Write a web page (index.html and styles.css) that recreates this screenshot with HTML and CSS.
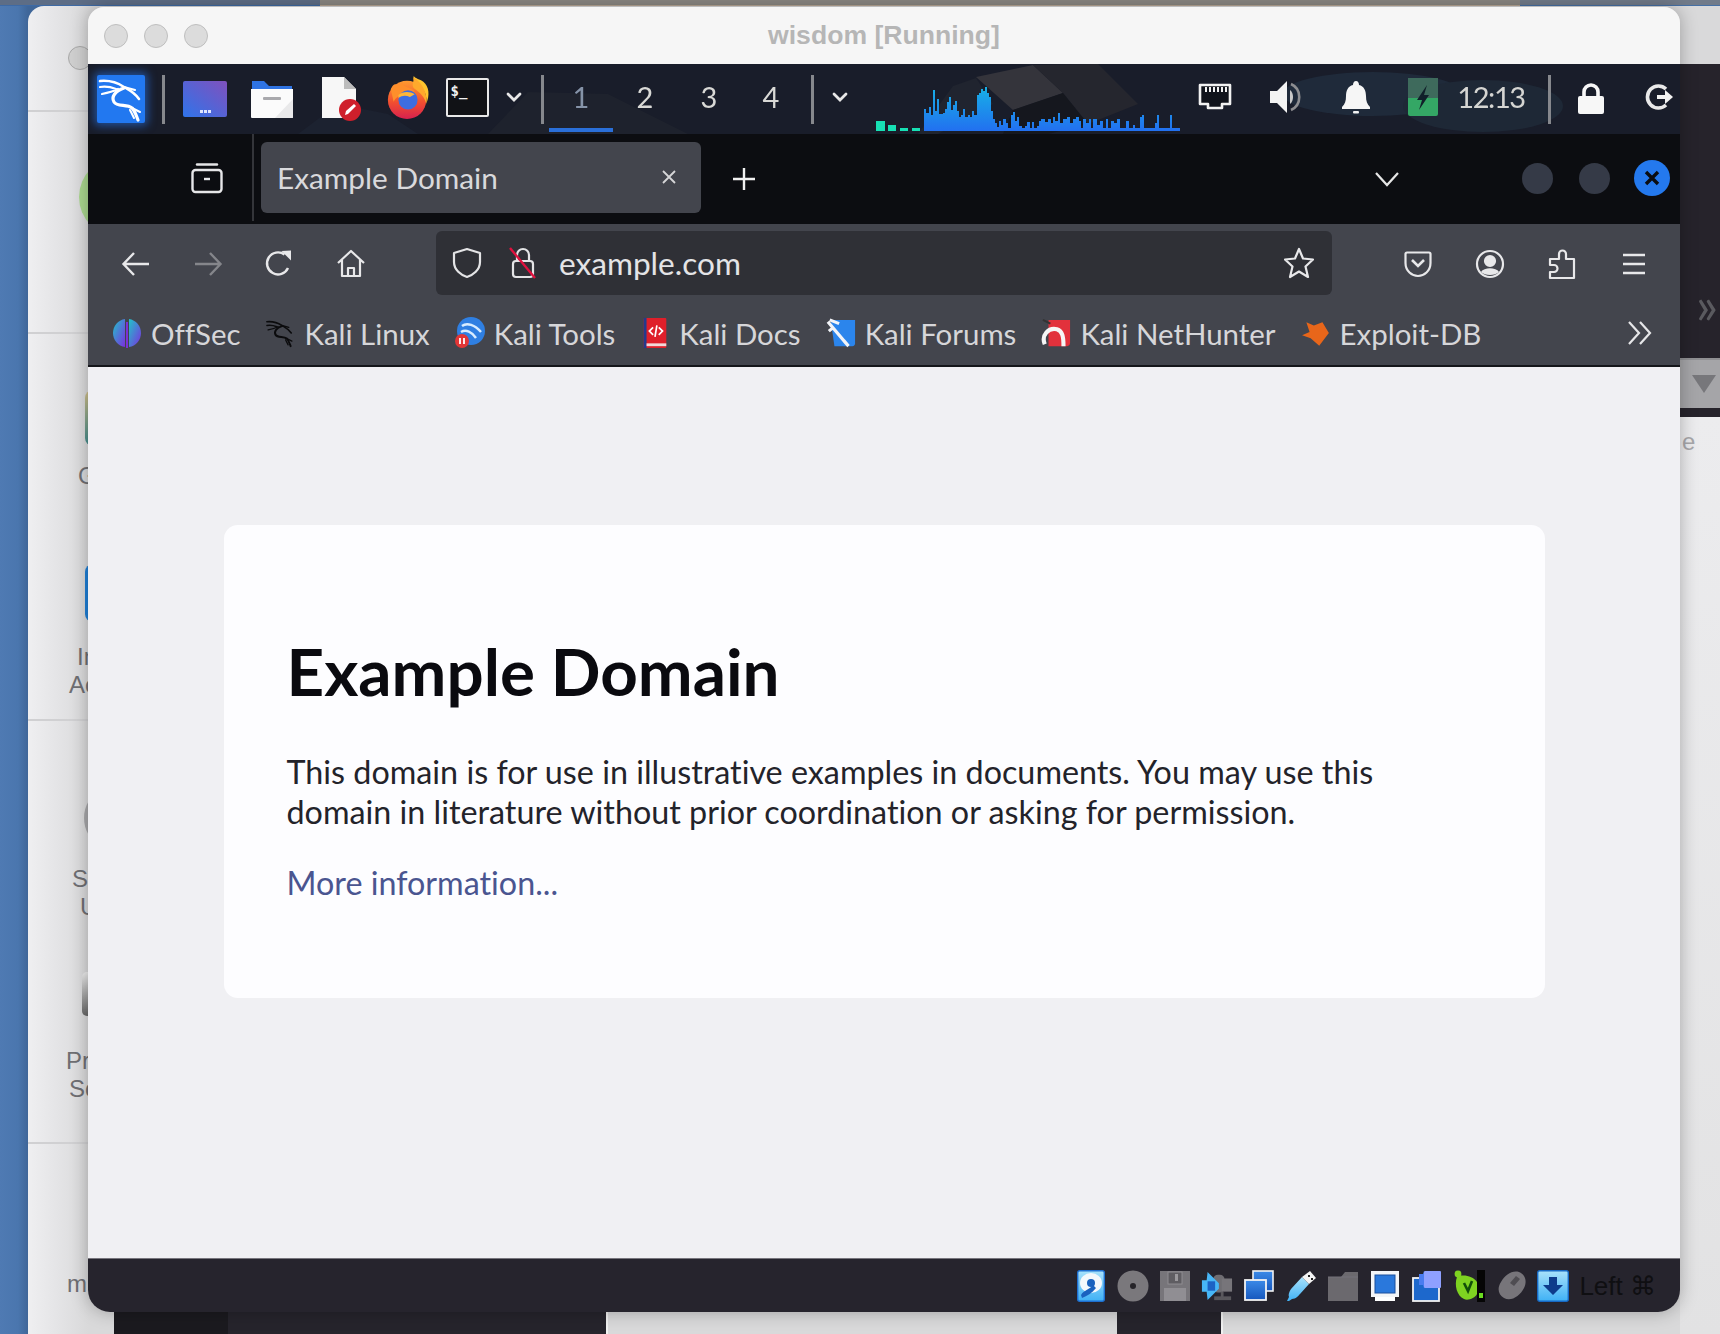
FILE: index.html
```html
<!DOCTYPE html>
<html lang="en">
<head>
<meta charset="utf-8">
<title>wisdom [Running]</title>
<link rel="stylesheet" href="styles.css">
</head>
<body>
<svg class="defs" width="0" height="0" aria-hidden="true">
  <defs>
    <symbol id="dragon" viewBox="0 0 48 48">
      <g fill="none" stroke="currentColor" stroke-linecap="round" stroke-linejoin="round">
        <path stroke-width="2.6" d="M3 6C13 5 21 8 27 12C32 15 37 17 42 24"/>
        <path stroke-width="2.2" d="M3 12C9 11 14 12 19 14M5 19C10 18 15 17 21 14M27 12L38 15"/>
        <path stroke-width="3.2" d="M27 13C18 16 14 22 17 27C20 32 30 29 35 33C38 36 39 40 41 45"/>
        <path stroke-width="2" d="M35 33L43 37M33 35L37 43"/>
      </g>
    </symbol>
    <linearGradient id="gMenu" x1="0" y1="1" x2="1" y2="0"><stop offset="0" stop-color="#2f74ea"/><stop offset="1" stop-color="#8051bd"/></linearGradient>
    <linearGradient id="gGraph" x1="0" y1="0" x2="0" y2="1"><stop offset="0" stop-color="#17b0e6"/><stop offset="1" stop-color="#2270f0"/></linearGradient>
    <linearGradient id="gFox" x1="0" y1="0" x2="0" y2="1"><stop offset="0" stop-color="#ff9b30"/><stop offset=".55" stop-color="#f2502f"/><stop offset="1" stop-color="#d8204f"/></linearGradient>
    <linearGradient id="gOff" x1="0" y1="0" x2="1" y2="1"><stop offset="0" stop-color="#21c3c9"/><stop offset="1" stop-color="#7a2fe0"/></linearGradient>
    <linearGradient id="gSky" x1="0" y1="0" x2="0" y2="1"><stop offset="0" stop-color="#a9e2fb"/><stop offset="1" stop-color="#3fb1f5"/></linearGradient>
    <linearGradient id="gDeep" x1="0" y1="0" x2="0" y2="1"><stop offset="0" stop-color="#3b8ae8"/><stop offset="1" stop-color="#1657bd"/></linearGradient>
  </defs>
</svg>

<div class="topstrip"><span class="ts-a"></span><span class="ts-b"></span><span class="ts-c"></span></div>

<section class="backwin">
  <div class="back-head"><span class="back-light"></span></div>
  <div class="back-sec sec-a"><span class="back-disc"></span></div>
  <div class="back-sec sec-b">
    <span class="frag frag-icon fi-a"></span>
    <p class="lbl l-g">G</p>
    <span class="frag frag-icon fi-b"></span>
    <p class="lbl l-in">In</p>
    <p class="lbl l-ac">Ac</p>
  </div>
  <div class="back-sec sec-c">
    <span class="frag frag-icon fi-c"></span>
    <p class="lbl l-s">S</p>
    <p class="lbl l-u">U</p>
    <span class="frag frag-icon fi-d"></span>
    <p class="lbl l-pr">Pr</p>
    <p class="lbl l-so">So</p>
  </div>
  <div class="back-sec sec-d"><p class="lbl l-m">m</p></div>
</section>

<aside class="sideapp">
  <div class="side-dark"><span class="side-chev">»</span></div>
  <div class="side-grey"><svg width="26" height="18" viewBox="0 0 26 18"><path d="M1 0H25L13 18Z" fill="#77777b"/></svg></div>
  <div class="side-bar"></div>
  <div class="side-light"><span class="side-e">e</span></div>
</aside>

<div class="under under-a"><span class="under-dark"></span></div>
<div class="under under-b"></div>

<main class="vmwin">
  <header class="titlebar">
    <span class="lights"><i></i><i></i><i></i></span>
    <span class="wintitle">wisdom [Running]</span>
  </header>

  <div class="vm">
    <nav class="panel">
      <svg class="wall" viewBox="0 0 1592 70" preserveAspectRatio="none" aria-hidden="true">
        <polygon points="400,70 440,28 520,30 600,70" fill="#1e222d"/>
        <polygon points="830,70 865,22 888,14 905,40 850,70" fill="#20242f"/>
        <polygon points="888,13 945,1 975,29 925,46" fill="#34343b"/>
        <polygon points="945,1 1010,0 1050,40 1000,60 975,29" fill="#25262e"/>
        <polygon points="925,46 975,29 1000,60 960,70 915,70" fill="#15171e"/>
        <ellipse cx="1285" cy="30" rx="90" ry="22" fill="#1f2a3a"/>
        <ellipse cx="1395" cy="42" rx="80" ry="26" fill="#1e2836"/>
        <polygon points="210,70 250,40 300,50 330,70" fill="#1c2230"/>
      </svg>
      <span class="cell c-kali">
        <span class="kali-tile"><svg width="48" height="48"><use href="#dragon"/></svg></span>
      </span>
      <span class="cell c-sep"><i class="psep"></i></span>
      <span class="cell c-menu">
        <svg width="44" height="36" viewBox="0 0 44 36"><rect width="44" height="36" rx="2" fill="url(#gMenu)"/><g fill="#dfe6ff"><rect x="17" y="29" width="3" height="3"/><rect x="21" y="29" width="3" height="3"/><rect x="25" y="29" width="3" height="3"/></g></svg>
      </span>
      <span class="cell c-folder">
        <svg width="44" height="40" viewBox="0 0 44 40"><path d="M2 2H14L19 7H42V14H2Z" fill="#2f73e2"/><path d="M1 10H43V38Q43 39 42 39H2Q1 39 1 38Z" fill="#fbfbfb"/><path d="M25 39L43 20V38Q43 39 42 39Z" fill="#e9e9ea"/><rect x="13" y="18" width="18" height="3" rx="1" fill="#a9a9ad"/></svg>
      </span>
      <span class="cell c-doc">
        <svg width="42" height="44" viewBox="0 0 42 44"><path d="M1 0H23L35 12V41H1Z" fill="#f7f7f7"/><path d="M23 0L35 12H23Z" fill="#bcbcbc"/><circle cx="29" cy="33" r="11" fill="#cf1f2b"/><path d="M24 38L25 34L33 27L35 29L27 37Z" fill="#fff"/></svg>
      </span>
      <span class="cell c-ff up">
        <svg width="46" height="46" viewBox="0 0 48 48"><circle cx="23" cy="27" r="20" fill="url(#gFox)"/><path d="M30 2C28 8 34 10 38 14C42 18 44 24 43 31C47 22 46 13 40 8C36 5 32 5 30 2Z" fill="#ffc52e"/><path d="M30 4C30 10 26 13 33 17C38 21 41 24 43 31C44 20 40 10 30 4Z" fill="#ffa92c"/><path d="M6 16C8 11 11 9 13 12L18 10C20 14 26 14 31 18L23 21C16 21 11 24 9 29Z" fill="#ff8f2b"/><circle cx="24" cy="27" r="10" fill="#3e6de0"/><path d="M14 22C18 18 26 18 31 21L26 24C22 22 18 22 14 25Z" fill="#ffb637"/></svg>
      </span>
      <span class="cell c-term up"><span class="term">$_</span></span>
      <span class="cell c-chev up"><svg width="16" height="10" viewBox="0 0 16 10"><path d="M2 2L8 8L14 2" fill="none" stroke="#e8e8e8" stroke-width="2.8" stroke-linecap="round"/></svg></span>
      <span class="cell c-sep2"><i class="psep"></i></span>
      <span class="cell c-ws1 ws ws-on">1</span>
      <span class="cell c-ws2 ws">2</span>
      <span class="cell c-ws3 ws">3</span>
      <span class="cell c-ws4 ws">4</span>
      <span class="cell c-sep3"><i class="psep"></i></span>
      <span class="cell c-chev2 up"><svg width="16" height="10" viewBox="0 0 16 10"><path d="M2 2L8 8L14 2" fill="none" stroke="#e8e8e8" stroke-width="2.8" stroke-linecap="round"/></svg></span>
      <span class="cell c-graph">
        <svg width="305" height="47" viewBox="0 0 305 47">
          <g fill="#17e0b4"><rect x="1" y="36" width="9" height="10"/><rect x="13" y="40" width="8" height="6"/><rect x="25" y="43" width="8" height="3"/><rect x="37" y="43" width="8" height="3"/></g>
          <path fill="url(#gGraph)" d="M49 46V24H51V28H54V22H56V30H58V5H60V26H62V14H64V29H68V28H70V24H72V17H74V12H76V25H78V20H80V16H82V26H84V32H86V30H88V24H90V32H93V30H95V32H97V26H99V30H102V10H104V8H106V4H108V6H110V2H112V8H114V12H116V26H118V34H120V38H122V42H124V36H126V40H128V34H131V38H133V43H136V30H138V27H140V36H142V32H144V41H147V43H150V41H152V37H155V43H157V37H159V43H162V41H164V36H166V34H170V37H173V34H176V38H178V32H180V36H183V28H185V38H188V34H192V32H195V38H198V34H201V32H204V36H206V43H208V34H211V38H214V34H216V43H218V34H222V40H225V36H228V43H231V34H233V43H236V36H239V38H242V34H245V43H248V43H251V36H254V43H258V40H260V43H265V32H267V30H269V43H272V43H280V38H282V30H284V43H290V43H295V30H297V43H305V46Z"/>
        </svg>
      </span>
      <span class="cell c-net up">
        <svg width="34" height="28" viewBox="0 0 34 28"><path d="M2 2H32V21H24V25H10V21H2Z" fill="#10131b" stroke="#f1f1f1" stroke-width="2.6" stroke-linejoin="round"/><path d="M8 4V9M12 4V9M16 4V9M20 4V9M24 4V9M28 4V9" stroke="#f1f1f1" stroke-width="2"/></svg>
      </span>
      <span class="cell c-vol up">
        <svg width="34" height="34" viewBox="0 0 34 34"><path d="M1 11H8L18 1V33L8 23H1Z" fill="#f3f3f3"/><path d="M21 10C25 13 25 21 21 24Z" fill="#c9c9c9"/><path d="M22 4C33 9 33 25 22 30" fill="none" stroke="#8d8d90" stroke-width="2.6"/></svg>
      </span>
      <span class="cell c-bell up">
        <svg width="30" height="34" viewBox="0 0 30 34"><path d="M15 1C17 1 18 3 18 5C23 6 25 11 25 16C25 21 26 24 29 27V29H1V27C4 24 5 21 5 16C5 11 7 6 12 5C12 3 13 1 15 1Z" fill="#f6f6f6"/><rect x="12" y="31" width="6" height="2.4" rx="1" fill="#f1f1f1"/></svg>
      </span>
      <span class="cell c-batt up">
        <svg width="32" height="40" viewBox="0 0 32 40"><rect x="1" y="1" width="30" height="38" rx="2" fill="#34a765"/><rect x="1" y="1" width="30" height="20" fill="#3e6a5c"/><path d="M20 8L10 23H15L12 33L22 18H17Z" fill="#11202a"/></svg>
      </span>
      <span class="cell c-clock">12:13</span>
      <span class="cell c-sep4"><i class="psep"></i></span>
      <span class="cell c-lock">
        <svg width="28" height="32" viewBox="0 0 28 32"><path d="M7 14V9A7 7 0 0 1 21 9V14" fill="none" stroke="#f7f7f7" stroke-width="3.6"/><rect x="1" y="13" width="26" height="18" rx="2" fill="#f7f7f7"/></svg>
      </span>
      <span class="cell c-out up">
        <svg width="30" height="30" viewBox="0 0 30 30"><path d="M22 7A11 11 0 1 0 22 23" fill="none" stroke="#e9e9e9" stroke-width="3.6"/><path d="M13 15H23" stroke="#f3f3f3" stroke-width="4"/><path d="M21 8L29 15L21 22Z" fill="#f3f3f3"/></svg>
      </span>
    </nav>

    <div class="ff">
      <div class="tabbar">
        <span class="tb-view">
          <svg width="32" height="32" viewBox="0 0 32 32" fill="none" stroke="#e6e6e8" stroke-width="2.4"><path d="M6 2.5H26" stroke-linecap="round"/><rect x="1.5" y="8" width="29" height="22" rx="3"/><path d="M13 17H19"/></svg>
        </span>
        <span class="tb-sep"></span>
        <div class="tab">
          <span class="tab-title">Example Domain</span>
          <svg class="tab-x" width="16" height="16" viewBox="0 0 16 16"><path d="M2 2L14 14M14 2L2 14" stroke="#d6d6d8" stroke-width="1.8"/></svg>
        </div>
        <svg class="tb-plus" width="26" height="26" viewBox="0 0 26 26"><path d="M13 2V24M2 13H24" stroke="#f0f0f0" stroke-width="2.4"/></svg>
        <svg class="tb-list" width="26" height="16" viewBox="0 0 26 16"><path d="M2 2L13 14L24 2" fill="none" stroke="#e6e6e6" stroke-width="2.2"/></svg>
        <span class="wbtn"></span>
        <span class="wbtn wbtn-2"></span>
        <span class="wbtn-close"><svg width="16" height="16" viewBox="0 0 16 16"><path d="M2 2L14 14M14 2L2 14" stroke="#0b0d12" stroke-width="3.4"/></svg></span>
      </div>

      <div class="toolbar">
        <span class="tbtn"><svg width="30" height="26" viewBox="0 0 30 26" fill="none" stroke="#e8e8ea" stroke-width="2.4"><path d="M28 13H3M13 2L2.5 13L13 24"/></svg></span>
        <span class="tbtn"><svg width="30" height="26" viewBox="0 0 30 26" fill="none" stroke="#85868b" stroke-width="2.4"><path d="M2 13H27M17 2L27.5 13L17 24"/></svg></span>
        <span class="tbtn"><svg width="30" height="30" viewBox="0 0 30 30" fill="none" stroke="#e8e8ea" stroke-width="2.4"><path d="M24 19A11 11 0 1 1 20.5 5.5"/><path d="M17.5 2L27 1.5V11.5Z" fill="#e8e8ea" stroke="none"/></svg></span>
        <span class="tbtn"><svg width="30" height="30" viewBox="0 0 30 30" fill="none" stroke="#e8e8ea" stroke-width="2.2" stroke-linejoin="round"><path d="M2 14L15 2L28 14M6 11V27H24V11M12 27V19H18V27"/></svg></span>
        <div class="urlbar">
          <svg class="ub-shield" width="30" height="32" viewBox="0 0 30 32"><path d="M15 2L28 6V15C28 23 21 28 15 30C9 28 2 23 2 15V6Z" fill="none" stroke="#e4e4e6" stroke-width="2.2" stroke-linejoin="round"/></svg>
          <svg class="ub-lock" width="30" height="34" viewBox="0 0 30 34"><path d="M9 15V9A6 6 0 0 1 21 9V15" fill="none" stroke="#e4e4e6" stroke-width="2.2"/><rect x="5" y="15" width="20" height="16" rx="3" fill="none" stroke="#e4e4e6" stroke-width="2.2"/><path d="M2 2L27 32" stroke="#e0123f" stroke-width="2.4"/></svg>
          <span class="url">example.com</span>
          <svg class="ub-star" width="30" height="32" viewBox="0 0 30 32"><path d="M15 2L19 11.5L29 12.5L21.5 19.5L24 30L15 24.5L6 30L8.5 19.5L1 12.5L11 11.5Z" fill="none" stroke="#e8e8ea" stroke-width="2.2" stroke-linejoin="round"/></svg>
        </div>
        <span class="tbtn-r first"><svg width="28" height="28" viewBox="0 0 28 28" fill="none" stroke="#e8e8ea" stroke-width="2.2"><path d="M3 2.5H25Q26.5 2.5 26.5 4V13C26.5 21 20 26 14 26C8 26 1.5 21 1.5 13V4Q1.5 2.5 3 2.5Z"/><path d="M8 10L14 16L20 10" stroke-width="2.6"/></svg></span>
        <span class="tbtn-r"><svg width="30" height="30" viewBox="0 0 30 30" fill="none" stroke="#e8e8ea" stroke-width="2.2"><circle cx="15" cy="15" r="13"/><circle cx="15" cy="12" r="5" fill="#e8e8ea"/><path d="M6 23C9 18 21 18 24 23C20 27 10 27 6 23Z" fill="#e8e8ea" stroke="none"/></svg></span>
        <span class="tbtn-r"><svg width="28" height="32" viewBox="0 0 28 32" fill="none" stroke="#e8e8ea" stroke-width="2.2" stroke-linejoin="round"><path d="M2 11H11V6A3.5 3.5 0 0 1 18 6V11H26V30H2V24H6A3.5 3.5 0 0 0 6 17H2Z"/></svg></span>
        <span class="tbtn-r"><svg width="28" height="24" viewBox="0 0 28 24"><path d="M3 3H25M3 12H25M3 21H25" stroke="#e8e8ea" stroke-width="2.6"/></svg></span>
      </div>

      <div class="bookmarks">
        <a class="bm bm-off">
          <svg viewBox="0 0 30 30"><path d="M13 1C6 2 1 8 1 15C1 22 6 28 13 29Z" fill="url(#gOff)"/><path d="M17 1C24 2 29 8 29 15C29 22 24 28 17 29Z" fill="url(#gOff)"/><path d="M15 4V30" stroke="#7b2fd8" stroke-width="2"/></svg>
          <span>OffSec</span>
        </a>
        <a class="bm bm-kali">
          <svg class="ink"><use href="#dragon"/></svg>
          <span>Kali Linux</span>
        </a>
        <a class="bm bm-tools">
          <svg viewBox="0 0 30 32"><circle cx="16" cy="14" r="14" fill="#2f7fe2"/><path d="M7 9C12 5 20 8 26 15M6 15C11 12 17 15 21 21" fill="none" stroke="#d8ecff" stroke-width="2.4"/><circle cx="7" cy="24" r="7" fill="#e23636"/><path d="M5 21V27M9 21V27" stroke="#fff" stroke-width="1.8"/></svg>
          <span>Kali Tools</span>
        </a>
        <a class="bm bm-docs">
          <svg viewBox="0 0 26 34"><rect x="1" y="1" width="24" height="32" rx="1" fill="#df1f2a"/><rect x="1" y="1" width="3" height="32" fill="#243a8c"/><rect x="4" y="28" width="21" height="3" fill="#f1d9d9"/><path d="M11 11L7 15L11 19M17 11L21 15L17 19M15 9L13 21" fill="none" stroke="#fff" stroke-width="1.8"/></svg>
          <span>Kali Docs</span>
        </a>
        <a class="bm bm-forums">
          <svg viewBox="0 0 32 32"><path d="M5 2H31V27Q31 30 28 30H9Z" fill="#2b85ec"/><path d="M2 4L24 30M4 2L14 6M8 10L3 14" fill="none" stroke="#f2f4f8" stroke-width="3.4"/></svg>
          <span>Kali Forums</span>
        </a>
        <a class="bm bm-nh">
          <svg viewBox="0 0 32 32"><path d="M8 2H31V26Q31 30 27 30H8Z" fill="#e2313c"/><path d="M4 28C0 18 8 10 17 12C23 14 24 20 24 30" fill="none" stroke="#f6f6f6" stroke-width="4.4"/><path d="M2 2L10 6" stroke="#333" stroke-width="2"/></svg>
          <span>Kali NetHunter</span>
        </a>
        <a class="bm bm-edb">
          <svg viewBox="0 0 28 28"><path d="M5 4L12 7L20 4L26 14L17 26L9 19L1 16L8 13Z" fill="#e8661a"/></svg>
          <span>Exploit-DB</span>
        </a>
        <svg class="bm-more" width="28" height="26" viewBox="0 0 28 26" fill="none" stroke="#e6e6e8" stroke-width="2.2"><path d="M3 2L13 13L3 24M14 2L24 13L14 24"/></svg>
      </div>
    </div>

    <div class="page">
      <article class="card">
        <h1>Example Domain</h1>
        <p>This domain is for use in illustrative examples in documents. You may use this domain in literature without prior coordination or asking for permission.</p>
        <p><a class="more">More information...</a></p>
      </article>
    </div>
  </div>

  <footer class="status">
    <svg viewBox="0 0 32 32"><rect x="2.7" y=".7" width="26.6" height="30.6" rx="2" fill="url(#gSky)" stroke="#1e6fd0" stroke-width="1.4"/><ellipse cx="16" cy="13" rx="11" ry="10" fill="#f4f8fc"/><circle cx="16" cy="13" r="4" fill="#1a62bf"/><path d="M6 25C9 20 14 20 18 15L21 18C17 23 12 26 7 28Z" fill="#1a62bf"/></svg>
    <svg viewBox="0 0 32 32"><circle cx="16" cy="16" r="15.5" fill="#7a787c"/><circle cx="16" cy="16" r="3" fill="#262429"/></svg>
    <svg viewBox="0 0 32 32"><path d="M1 1H31V31H1Z" fill="#77757a"/><rect x="9" y="2" width="14" height="12" fill="#5f5d62" stroke="#8f8d91"/><rect x="16" y="4" width="3" height="7" fill="#9a989c"/><rect x="5" y="18" width="22" height="13" fill="#908e93"/></svg>
    <svg viewBox="0 0 34 32"><rect x="13" y="4" width="12" height="19" rx="5" fill="#6f6d72"/><path d="M22 8H33V22H22Z" fill="#77757a"/><rect x="14" y="27" width="18" height="4" fill="#59575c"/><rect x="21" y="22" width="3" height="6" fill="#59575c"/><path d="M1 10H6L7 1L19 13V19L7 31L6 22H1Z" fill="#47b6f6"/><rect x="7" y="11" width="8" height="10" fill="#1c63c4"/></svg>
    <svg viewBox="0 0 30 32"><rect x="9" y="1" width="20" height="20" fill="url(#gDeep)" stroke="#f3f3f3" stroke-width="1.6"/><rect x="1" y="10" width="21" height="20" fill="url(#gDeep)" stroke="#f3f3f3" stroke-width="1.8"/></svg>
    <svg viewBox="0 0 30 32"><path d="M2 29L1 31L3 31L6 29C10 29 12 26 14 24L23 14L16 7L5 19C3 22 2 25 3 27Z" fill="url(#gSky)"/><path d="M16 7L24 1L30 8L23 14Z" fill="#f4f4f4"/><rect x="22" y="5" width="2" height="2" fill="#222"/><rect x="25" y="8" width="2" height="2" fill="#222"/></svg>
    <svg viewBox="0 0 32 30"><path d="M1 6H14L18 1H31V30H1Z" fill="#6b696e"/><path d="M1 6H31" stroke="#75737a"/></svg>
    <svg viewBox="0 0 30 32"><rect x="1" y="1" width="28" height="26" fill="#f3f5f8"/><rect x="5" y="5" width="20" height="18" fill="#2a78dc" stroke="#1a4f9c"/><rect x="5" y="27" width="20" height="4" fill="#fff"/></svg>
    <svg viewBox="0 0 30 32"><rect x="1" y="8" width="26" height="23" fill="#1d68cc" stroke="#f3f3f3" stroke-width="1.8"/><rect x="12" y="1" width="17" height="17" rx="1" fill="#8fa0ff"/><path d="M7 4H11L12 1V18L11 15H7Z" fill="#4a7cf0"/></svg>
    <svg viewBox="0 0 32 32"><path d="M4 7C10 4 20 6 24 12V24C22 28 15 31 11 29C4 26 1 15 4 7Z" fill="#7ed321"/><circle cx="5" cy="4" r="3.4" fill="#7ed321"/><path d="M11 13L15 21L19 11" fill="none" stroke="#124f0a" stroke-width="2.6"/><rect x="24" y="0" width="8" height="32" fill="#050505"/><rect x="26" y="23" width="4" height="5" fill="#6bdd20"/></svg>
    <svg viewBox="0 0 32 32"><path d="M9 28C3 25 2 18 6 12C10 5 17 0 24 2C31 5 32 12 29 18C25 26 16 32 9 28Z" fill="#77757a"/><path d="M15 13L21 6L25 9L19 16Z" fill="#4f4d52"/></svg>
    <svg viewBox="0 0 32 32"><rect x=".7" y=".7" width="30.6" height="30.6" rx="2" fill="url(#gSky)" stroke="#1769c4" stroke-width="1.4"/><path d="M12 7H20V15H26L16 25L6 15H12Z" fill="#0e3c8c"/></svg>
    <span class="hostkey">Left <span class="cmd">⌘</span></span>
  </footer>
</main>
</body>
</html>
```

FILE: styles.css
```css
* { box-sizing: border-box; }
html, body { margin: 0; padding: 0; }
body {
  width: 1720px;
  height: 1334px;
  position: relative;
  overflow: hidden;
  background: linear-gradient(90deg, #4f7ab3 0, #4a76ae 18px, #3f6699 28px);
  font-family: "Lato", "Noto Sans", sans-serif;
  font-variant-ligatures: none;
}
.defs { position: absolute; }

/* top strip of the desktop */
.topstrip { position: absolute; left: 0; top: 0; width: 1720px; height: 6px; display: flex; }
.ts-a { width: 320px; background: #5d6d86; border-bottom: 1px solid #3d6aa6; }
.ts-b { flex: 1; background: #8a8782; border-bottom: 1px solid #b8a794; }
.ts-c { width: 200px; background: #717b8a; border-bottom: 1px solid #4570a6; }

/* window behind */
.backwin {
  position: absolute;
  left: 28px;
  top: 6px;
  width: 1720px;
  height: 1340px;
  border-radius: 16px 0 0 0;
  background: linear-gradient(90deg, #efeff1 0, #e4e4e6 30px, #d9d9da 60px);
  color: #6f6f73;
  font-family: "Liberation Sans", Arial, sans-serif;
  font-size: 24px;
  line-height: 28px;
}
.back-head { height: 104px; padding: 40px 0 0 40px; }
.back-light { display: block; width: 24px; height: 24px; border-radius: 50%; background: #cfcfcf; border: 1px solid #a8a8a8; }
.back-sec { border-top: 2px solid #d0d0d2; position: relative; }
.sec-a { height: 222px; }
.back-disc { position: absolute; left: 51px; top: 45px; width: 80px; height: 80px; border-radius: 50%; background: #a9d68e; }
.sec-b { height: 387px; }
.sec-c { height: 423px; }
.sec-d { height: 203px; }
.lbl { margin: 0; position: absolute; }
.frag-icon { position: absolute; display: block; }
.fi-a { left: 57px; top: 56px; width: 30px; height: 56px; border-radius: 8px; background: linear-gradient(180deg, #d3c08a, #3f8a8c); }
.fi-b { left: 57px; top: 230px; width: 30px; height: 58px; border-radius: 8px; background: #1f7fd6; }
.fi-c { left: 56px; top: 74px; width: 30px; height: 46px; border-radius: 50%; background: #a8a8aa; }
.fi-d { left: 54px; top: 251px; width: 30px; height: 44px; border-radius: 5px; background: linear-gradient(180deg, #eee, #666); }
.l-g { left: 50px; top: 128px; }
.l-in { left: 49px; top: 309px; }
.l-ac { left: 41px; top: 337px; }
.l-s { left: 44px; top: 144px; }
.l-u { left: 52px; top: 172px; }
.l-pr { left: 38px; top: 326px; }
.l-so { left: 41px; top: 354px; }
.l-m { left: 39px; top: 126px; }

/* strip of another app, right of the VM window */
.sideapp { position: absolute; left: 1680px; top: 64px; width: 40px; height: 1270px; display: flex; flex-direction: column; }
.side-dark { height: 294px; background: #26232b; position: relative; display: flex; justify-content: center; padding-top: 220px; }
.side-chev { color: #5a5a5f; font-size: 52px; line-height: 40px; margin-left: 14px; }
.side-grey { height: 50px; background: #a5a5a8; border-top: 2px solid #8f8f92; display: flex; align-items: center; padding-left: 11px; }
.side-bar { height: 9px; background: #26232b; }
.side-light { flex: 1; background: linear-gradient(180deg, #ececee, #e2e2e3); padding: 11px 0 0 2px; }
.side-e { color: #a7a7aa; font: 24px/28px "Liberation Sans", Arial, sans-serif; }

/* dark windows peeking out below */
.under { position: absolute; top: 1312px; height: 22px; background: #26242c; }
.under-a { left: 114px; width: 494px; border-right: 2px solid #f1f1f1; }
.under-dark { display: block; width: 114px; height: 22px; background: #1b1a1f; }
.under-b { left: 1117px; width: 106px; border-right: 2px solid #f1f1f1; }

/* VM window */
.vmwin {
  position: absolute;
  left: 88px;
  top: 7px;
  width: 1592px;
  height: 1305px;
  display: flex;
  flex-direction: column;
  border-radius: 16px 16px 22px 22px;
  overflow: hidden;
  box-shadow: 0 0 18px rgba(0, 0, 0, .28);
}
.titlebar { height: 57px; background: #f6f6f6; display: flex; align-items: center; justify-content: center; position: relative; flex: none; }
.lights { position: absolute; left: 16px; top: 17px; display: flex; gap: 16px; }
.lights i { display: block; width: 24px; height: 24px; border-radius: 50%; background: #dcdcdc; border: 1px solid #bfbfbf; }
.wintitle { font: 700 26.6px "Liberation Sans", Arial, sans-serif; color: #b6b6b6; }

.vm { flex: 1; display: flex; flex-direction: column; filter: blur(.45px); min-height: 0; }

/* XFCE panel */
.panel {
  flex: none;
  height: 70px;
  background: #191d2a;
  position: relative;
  display: grid;
  grid-template-columns: 66px 18px 66px 68px 72px 60px 58px 36px 20px 58px 70px 58px 66px 16px 40px 330px 50px 92px 48px 86px 50px 66px 18px 80px;
  align-items: center;
}
.wall { position: absolute; inset: 0; width: 100%; height: 100%; }
.cell { position: relative; display: flex; justify-content: center; align-items: center; height: 70px; }
.cell.up { padding-bottom: 4px; }
.cell svg { flex: none; }
.psep { display: block; width: 3px; height: 49px; background: #86888d; }
.kali-tile {
  width: 48px; height: 48px; display: block; color: #fff;
  background: #2278f0;
  box-shadow: 0 0 8px 3px rgba(40, 120, 240, .55);
  border-radius: 2px;
}
.term {
  display: block; width: 43px; height: 39px; flex: none;
  background: #111216;
  border: 2px solid #e9e9e9;
  border-radius: 2px;
  color: #f2f2f2;
  font: 700 14px/18px "DejaVu Sans Mono", monospace;
  padding: 2px 0 0 3px;
}
.ws { font: 400 29px/1 "Lato", sans-serif; color: #d9d9d6; padding-bottom: 6px; }
.ws-on { color: #8593a8; }
.ws-on::after { content: ""; position: absolute; left: -3px; right: -3px; bottom: 2px; height: 4px; background: #2a6fd8; }
.c-graph { justify-content: flex-end; align-items: flex-start; padding: 21px 10px 0 0; }
.c-clock { font: 400 29px/1 "Lato", sans-serif; color: #d5d5d2; letter-spacing: -1.4px; white-space: nowrap; padding-bottom: 6px; }
.cell.c-out { justify-content: flex-end; padding-right: 6px; }

/* Firefox chrome */
.ff { flex: none; }
.tabbar { height: 90px; background: #0c0d11; display: flex; align-items: flex-start; position: relative; }
.tb-view { margin: 28px 0 0 103px; display: block; height: 32px; }
.tb-sep { width: 2px; height: 87px; background: #34353a; margin-left: 29px; }
.tab {
  width: 440px; height: 71px; margin: 8px 0 0 7px;
  background: #43454d; border-radius: 6px;
  display: flex; align-items: center; padding: 0 24px 0 16px;
}
.tab-title { font-size: 29.8px; color: #d9d9dc; flex: 1; }
.tab-x { flex: none; margin-top: -2px; }
.tb-plus { margin: 32px 0 0 30px; }
.tb-list { margin: 37px 0 0 617px; }
.wbtn { width: 31px; height: 31px; border-radius: 50%; background: #353a47; margin: 29px 0 0 122px; }
.wbtn-2 { margin-left: 26px; }
.wbtn-close { width: 36px; height: 36px; border-radius: 50%; background: #2479ee; margin: 26px 0 0 24px; display: flex; align-items: center; justify-content: center; }

.toolbar { height: 71px; background: #43454d; display: flex; align-items: center; padding: 9px 0 0 24px; gap: 23.5px; }
.tbtn { width: 48px; display: flex; justify-content: center; align-items: center; }
.urlbar {
  width: 896px; height: 64px; margin: -3px 0 0 38px;
  background: #2f3036; border-radius: 6px;
  display: flex; align-items: center; padding: 0 18px 0 16px;
}
.ub-lock { margin-left: 26px; }
.url { margin-left: 21px; font-size: 31.6px; color: #e4e4e6; }
.ub-star { margin-left: auto; }
.tbtn-r { width: 30px; display: flex; justify-content: center; margin-left: 18.5px; }
.tbtn-r.first { margin-left: 47px; }

.bookmarks { height: 72px; background: #43454d; border-bottom: 2px solid #15161a; display: flex; align-items: center; padding: 6px 0 0 24px; gap: 25px; position: relative; }
.bm { display: flex; align-items: center; gap: 9px; font-size: 29.45px; color: #d6d6d9; }
.bm svg { flex: none; width: 30px; height: 32px; }
.ink { color: #0b0b0d; }
.bm-more { margin-left: auto; margin-right: 26px; }

/* page */
.page { flex: 1; background: #f0f0f3; display: flex; justify-content: center; padding-top: 158px; min-height: 0; }
.card {
  width: 1321px; height: 473px;
  background: #fdfdff;
  border-radius: 14px;
  padding: 113px 63px 0 63px;
  color: #23232a;
}
.card h1 { margin: 0 0 48px; font-size: 65.5px; line-height: 66px; font-weight: 700; color: #0a0a0f; }
.card p { margin: 0 0 31px; font-size: 32.3px; line-height: 40px; max-width: 1110px; }
.more { color: #4a5590; }

/* VirtualBox status bar */
.status {
  flex: none; height: 54px;
  background: #26242d;
  border-top: 1px solid #77757c;
  display: flex; align-items: center; justify-content: flex-end;
  gap: 10px; padding-right: 24px;
}
.status svg { flex: none; width: 32px; height: 32px; }
.hostkey { margin-left: 0; font: 26px/1 "Liberation Sans", Arial, sans-serif; color: #0f0f12; white-space: nowrap; }
.cmd { font-family: "DejaVu Sans", sans-serif; }
```
